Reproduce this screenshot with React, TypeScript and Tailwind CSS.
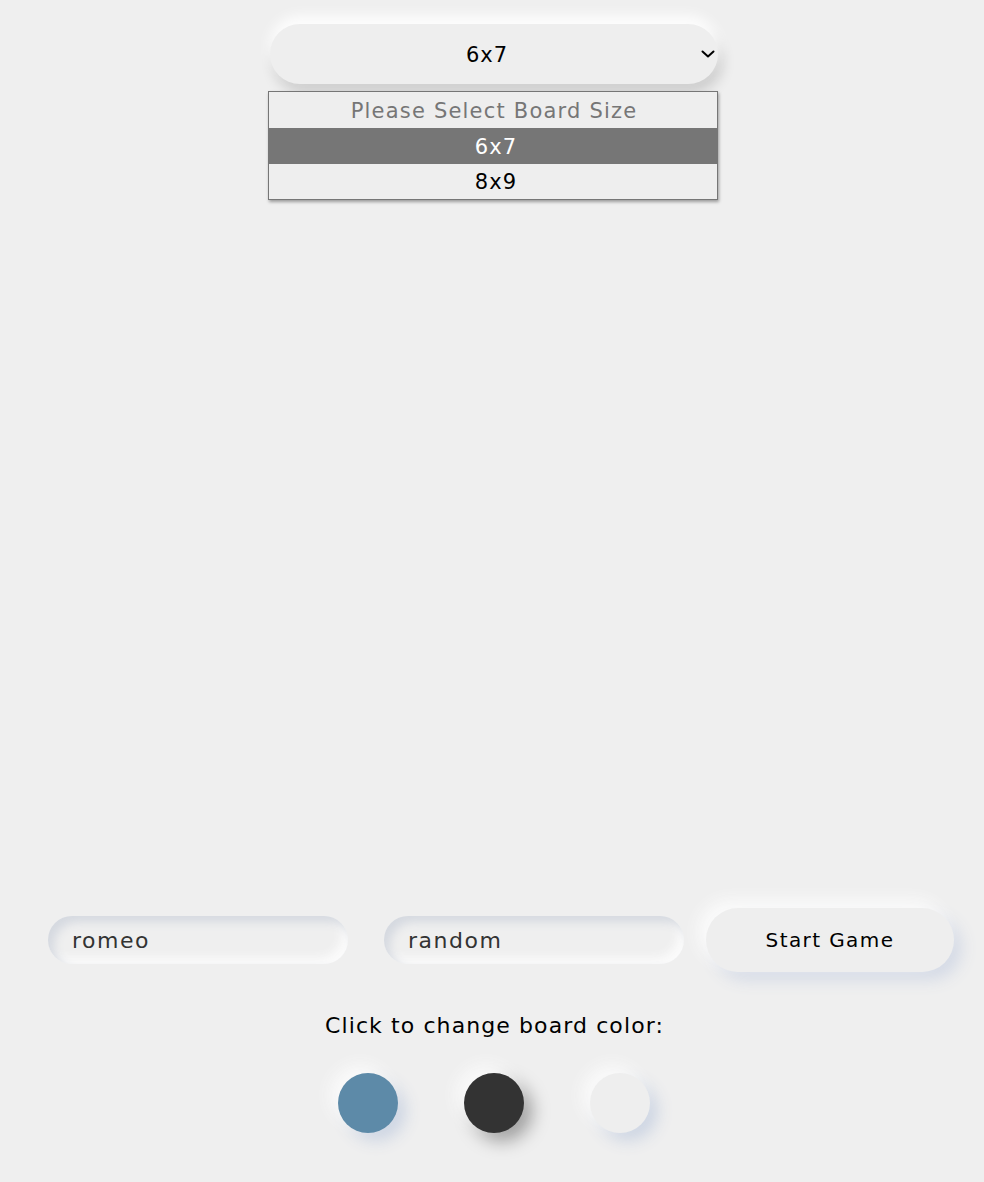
import React from "react";

const font = { fontFamily: '"DejaVu Sans", "Open Sans", sans-serif' };

export default function App() {
  return (
    <div className="min-h-[1182px] w-full bg-[#efefef] text-black" style={font}>
      <div className="flex flex-col items-center pt-[24px]">
        <div className="relative w-[448px] ml-[4px]">
          <div className="flex h-[60px] w-full items-center justify-center rounded-full bg-[#eeeeee] pt-[3px] shadow-[0px_-8px_14px_rgba(255,255,255,0.95),4px_8px_14px_rgba(0,0,0,0.16)]">
            <span className="ml-[-14px] text-[21px] tracking-[1px]">6x7</span>
            <svg className="absolute right-[3px] top-[26px]" width="14" height="8" viewBox="0 0 14 8" fill="none">
              <path d="M1.5 1.5 L7 6.5 L12.5 1.5" stroke="#000" strokeWidth="2" strokeLinecap="round" strokeLinejoin="round" />
            </svg>
          </div>
          <div className="absolute left-[-2px] top-[67px] w-[450px] border border-[#767676] bg-[#eeeeee] shadow-[1px_2px_3px_rgba(0,0,0,0.35)]">
            <div className="flex h-[36px] items-center justify-center pt-[3px] pl-[2px] text-[21px] tracking-[1.2px] text-[#767676]">Please Select Board Size</div>
            <div className="flex h-[36px] items-center justify-center bg-[#767676] pt-[3px] pl-[6px] text-[21px] tracking-[1.2px] text-white">6x7</div>
            <div className="flex h-[35px] items-center justify-center pt-[3px] pl-[6px] text-[21px] tracking-[1.2px]">8x9</div>
          </div>
        </div>
      </div>

      <div className="h-[824px]" />

      <div className="flex items-center pl-[48px]">
        <div className="flex h-[48px] w-[300px] items-center rounded-full bg-[#efefef] pl-[24px] text-[22px] tracking-[1.5px] text-[#333333] shadow-[inset_6px_6px_10px_#d5d9e0,inset_-6px_-6px_10px_#fbfbfb]">romeo</div>
        <div className="ml-[36px] flex h-[48px] w-[300px] items-center rounded-full bg-[#efefef] pl-[24px] text-[22px] tracking-[1.5px] text-[#333333] shadow-[inset_6px_6px_10px_#d5d9e0,inset_-6px_-6px_10px_#fbfbfb]">random</div>
        <div className="ml-[22px] flex h-[64px] w-[248px] items-center justify-center rounded-full bg-[#eeeeee] text-[20px] tracking-[1.4px] shadow-[-8px_-8px_16px_#fbfbfb,8px_8px_16px_#d4dae6]">Start Game</div>
      </div>

      <div className="mt-[40px] pl-[5px] text-center text-[22px] leading-[28px] tracking-[1.1px]">
        Click to change board color:
      </div>

      <div className="mt-[33px] flex justify-center gap-[66px] pl-[3px]">
        <div className="h-[60px] w-[60px] rounded-full bg-[#5d8aa8] shadow-[-8px_-8px_16px_#fafafa,8px_8px_16px_#cdd5e3]" />
        <div className="h-[60px] w-[60px] rounded-full bg-[#333333] shadow-[-8px_-8px_16px_#fafafa,8px_8px_18px_rgba(0,0,0,0.35)]" />
        <div className="h-[60px] w-[60px] rounded-full bg-[#eeeeee] shadow-[-8px_-8px_16px_#fafafa,8px_8px_16px_#cdd5e3]" />
      </div>
    </div>
  );
}
